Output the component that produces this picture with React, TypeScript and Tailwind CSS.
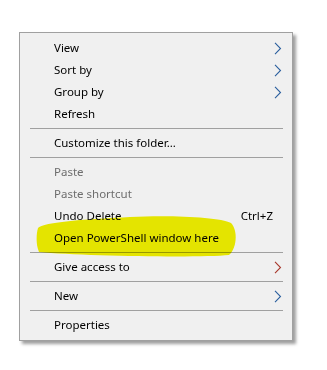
import React from 'react';

type Item =
  | { kind: 'sep' }
  | { kind: 'item'; label: string; disabled?: boolean; shortcut?: string; sub?: 'blue' | 'red' };

const items: Item[] = [
  { kind: 'item', label: 'View', sub: 'blue' },
  { kind: 'item', label: 'Sort by', sub: 'blue' },
  { kind: 'item', label: 'Group by', sub: 'blue' },
  { kind: 'item', label: 'Refresh' },
  { kind: 'sep' },
  { kind: 'item', label: 'Customize this folder...' },
  { kind: 'sep' },
  { kind: 'item', label: 'Paste', disabled: true },
  { kind: 'item', label: 'Paste shortcut', disabled: true },
  { kind: 'item', label: 'Undo Delete', shortcut: 'Ctrl+Z' },
  { kind: 'item', label: 'Open PowerShell window here' },
  { kind: 'sep' },
  { kind: 'item', label: 'Give access to', sub: 'red' },
  { kind: 'sep' },
  { kind: 'item', label: 'New', sub: 'blue' },
  { kind: 'sep' },
  { kind: 'item', label: 'Properties' },
];

const Chevron: React.FC<{ tone: 'blue' | 'red' }> = ({ tone }) => (
  <svg width="8" height="13" viewBox="0 0 8 13" className="block">
    <polyline
      points="1,0.8 6.5,6.5 1,12.2"
      fill="none"
      stroke={tone === 'blue' ? '#2b5f9e' : '#a8382c'}
      strokeWidth="1.1"
    />
  </svg>
);

const App: React.FC = () => {
  return (
    <div className="w-[327px] h-[370px] bg-white pt-[32px] pl-[19px] font-['Segoe_UI','Noto_Sans',sans-serif] text-[11.5px] leading-none">
      <div className="relative w-[274px] border border-[#a0a0a0] bg-[#f0f0f0] pt-[4px] pb-[4px] shadow-[3px_3px_3px_rgba(0,0,0,0.38)]">
        {items.map((it, i) =>
          it.kind === 'sep' ? (
            <div key={i} className="h-[7px] flex items-center pl-[10px] pr-[9px]">
              <div className="h-px w-full bg-[#a0a0a0]" />
            </div>
          ) : (
            <div key={i} className="h-[22px] flex items-center pl-[34px] pr-[10px]">
              <span className={`flex-1 ${it.disabled ? 'text-[#6d6d6d]' : 'text-black'}`}>{it.label}</span>
              {it.shortcut && <span className="text-black mr-[9px]">{it.shortcut}</span>}
              {it.sub && <Chevron tone={it.sub} />}
            </div>
          )
        )}
        {/* marker highlight drawn over the menu */}
        <svg
          className="absolute left-[-20px] top-[-33px] pointer-events-none mix-blend-multiply"
          width="327"
          height="370"
          viewBox="0 0 327 370"
        >
          <path
            d="M38,228 C42,222 90,219 130,217 C170,215 220,217 231,223 C238,230 237,248 229,255 C200,258 80,256 39,252 C36,245 36,235 38,228 Z"
            fill="#f3f300"
          />
        </svg>
      </div>
    </div>
  );
};

export default App;
